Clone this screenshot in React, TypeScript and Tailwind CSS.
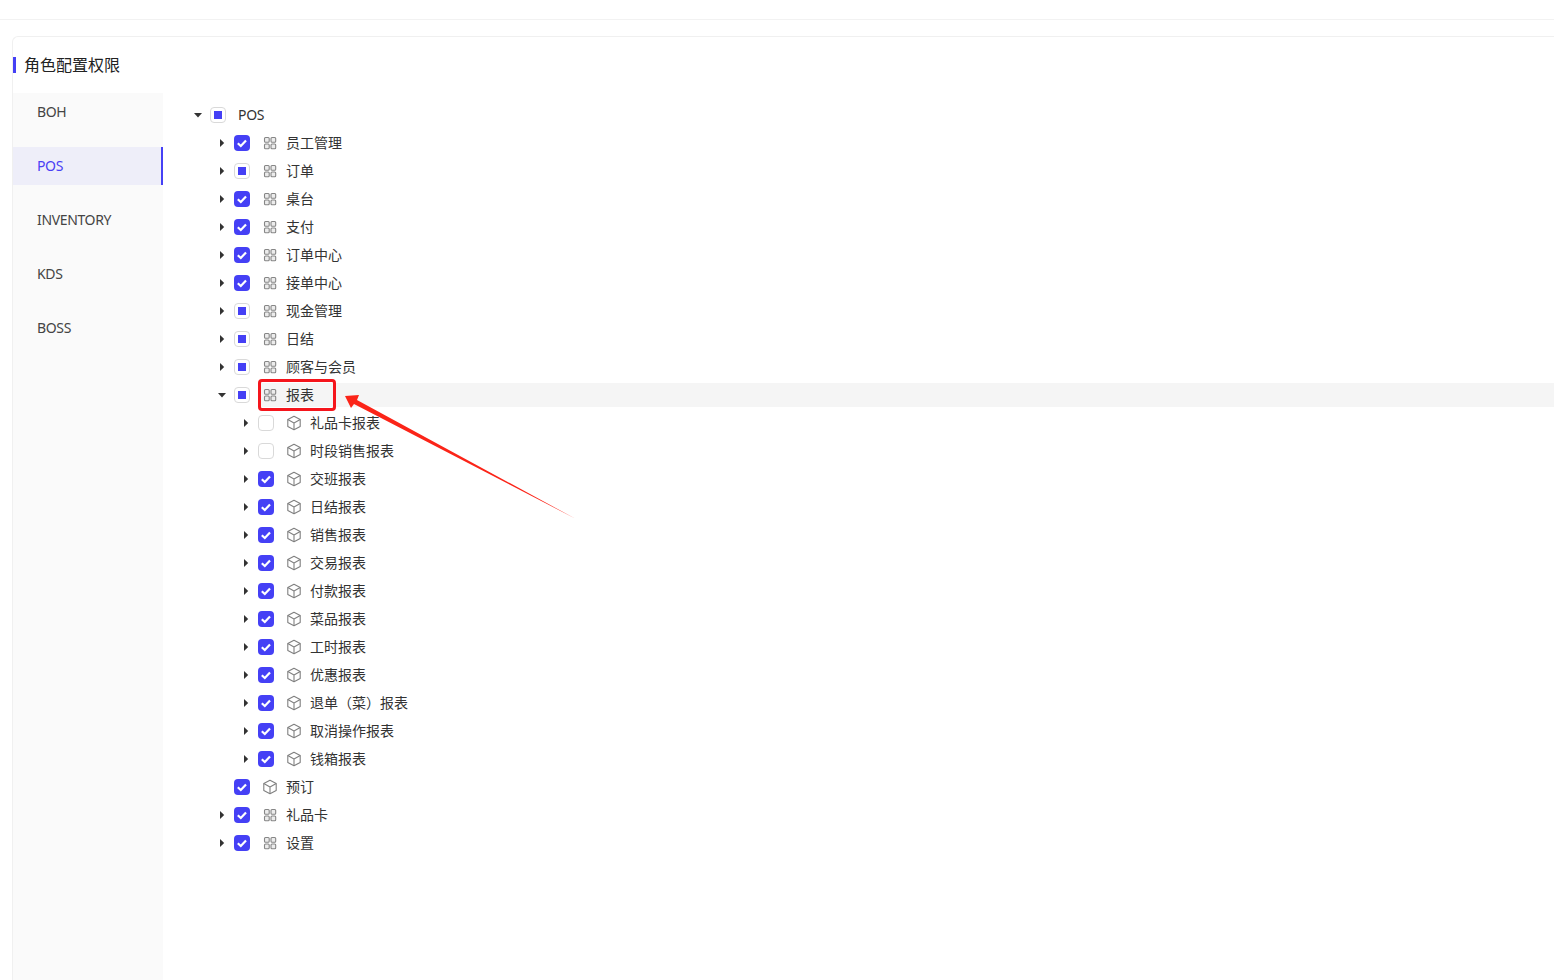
import React from "react";

function Grid() {
  return (
    <svg width="14" height="14" viewBox="0 0 14 14" fill="#ececec" stroke="#868686" strokeWidth="1.1">
      <rect x="1.5" y="1.5" width="4.7" height="4.7" rx="1" />
      <rect x="8" y="1.5" width="4.7" height="4.7" rx="1" />
      <rect x="1.5" y="8" width="4.7" height="4.7" rx="1" />
      <rect x="8" y="8" width="4.7" height="4.7" rx="1" />
    </svg>
  );
}

function Cube() {
  return (
    <svg width="16" height="16" viewBox="0 0 16 16" fill="none" stroke="#808080" strokeWidth="1.1" strokeLinejoin="round">
      <path d="M8 1.2 14.2 4.6V11.4L8 14.8 1.8 11.4V4.6Z" />
      <path d="M1.8 4.6 8 8 14.2 4.6M8 8V14.8" />
    </svg>
  );
}

function Caret({ open }: { open?: boolean }) {
  return (
    <svg width="10" height="10" viewBox="0 0 10 10" fill="#333333">
      {open ? <path d="M1 3H9L5 7.4Z" /> : <path d="M3 1V9L7.2 5Z" />}
    </svg>
  );
}

type State = "all" | "half" | "none";

function Check({ state }: { state: State }) {
  if (state === "all") {
    return (
      <span className="flex h-4 w-4 shrink-0 items-center justify-center rounded-[4px] bg-[#4540f5]">
        <svg width="14" height="14" viewBox="0 0 14 14" fill="none" stroke="#ffffff" strokeWidth="2.2">
          <path d="M2.8 7.2 5.8 10 11 4.4" />
        </svg>
      </span>
    );
  }
  return (
    <span className="flex h-4 w-4 shrink-0 items-center justify-center rounded-[4px] border border-[#d9d9d9] bg-white">
      {state === "half" && <span className="h-2 w-2 bg-[#4540f5]" />}
    </span>
  );
}

type Row = { level: number; label: string; state: State; icon?: "grid" | "cube"; open?: boolean; leaf?: boolean; active?: boolean };

const rows: Row[] = [
  { level: 0, label: "POS", state: "half", open: true },
  { level: 1, label: "员工管理", state: "all", icon: "grid" },
  { level: 1, label: "订单", state: "half", icon: "grid" },
  { level: 1, label: "桌台", state: "all", icon: "grid" },
  { level: 1, label: "支付", state: "all", icon: "grid" },
  { level: 1, label: "订单中心", state: "all", icon: "grid" },
  { level: 1, label: "接单中心", state: "all", icon: "grid" },
  { level: 1, label: "现金管理", state: "half", icon: "grid" },
  { level: 1, label: "日结", state: "half", icon: "grid" },
  { level: 1, label: "顾客与会员", state: "half", icon: "grid" },
  { level: 1, label: "报表", state: "half", icon: "grid", open: true, active: true },
  { level: 2, label: "礼品卡报表", state: "none", icon: "cube" },
  { level: 2, label: "时段销售报表", state: "none", icon: "cube" },
  { level: 2, label: "交班报表", state: "all", icon: "cube" },
  { level: 2, label: "日结报表", state: "all", icon: "cube" },
  { level: 2, label: "销售报表", state: "all", icon: "cube" },
  { level: 2, label: "交易报表", state: "all", icon: "cube" },
  { level: 2, label: "付款报表", state: "all", icon: "cube" },
  { level: 2, label: "菜品报表", state: "all", icon: "cube" },
  { level: 2, label: "工时报表", state: "all", icon: "cube" },
  { level: 2, label: "优惠报表", state: "all", icon: "cube" },
  { level: 2, label: "退单（菜）报表", state: "all", icon: "cube" },
  { level: 2, label: "取消操作报表", state: "all", icon: "cube" },
  { level: 2, label: "钱箱报表", state: "all", icon: "cube" },
  { level: 1, label: "预订", state: "all", icon: "cube", leaf: true },
  { level: 1, label: "礼品卡", state: "all", icon: "grid" },
  { level: 1, label: "设置", state: "all", icon: "grid" },
];

const tabs = ["BOH", "POS", "INVENTORY", "KDS", "BOSS"];

function TreeRow({ row }: { row: Row }) {
  return (
    <div className="flex h-7 items-center">
      <span className={row.level === 0 ? "w-0" : row.level === 1 ? "w-6" : "w-12"} />
      <span className="flex h-6 w-6 shrink-0 items-center justify-center">
        {!row.leaf && <Caret open={row.open} />}
      </span>
      <Check state={row.state} />
      <div className={"ml-2 flex h-6 flex-1 items-center " + (row.active ? "bg-[#f5f5f5]" : "")}>
        {row.icon && (
          <span className={"flex h-6 shrink-0 items-center " + (row.icon === "grid" ? "ml-[5px] w-[23px]" : "ml-1 w-6")}>
            {row.icon === "grid" ? <Grid /> : <Cube />}
          </span>
        )}
        <span className={row.icon ? "" : "ml-1 tracking-[-0.3px]"}>{row.label}</span>
      </div>
    </div>
  );
}

export default function App() {
  return (
    <div className="relative h-[980px] w-[1554px] overflow-hidden bg-white font-['Noto_Sans','Noto_Sans_CJK_SC',sans-serif] text-sm text-[#333333]">
      <div className="h-5 border-b border-[#f2f2f2]" />
      <div className="ml-3 mt-4 h-[960px] rounded-tl-md border-l border-t border-[#f0f0f0]">
        <div className="flex h-14 items-center pb-[1px]">
          <span className="h-4 w-[3px] bg-[#4540f5]" />
          <span className="ml-2 text-base leading-6 text-[#222222]">角色配置权限</span>
        </div>
        <div className="flex h-[887px]">
          <div className="w-[150px] shrink-0 bg-[#fafafa]">
            <div className="flex flex-col gap-4">
              {tabs.map((t) => (
                <div
                  key={t}
                  className={
                    "flex h-[38px] items-center pl-6 leading-[38px] tracking-[-0.35px] " +
                    (t === "POS" ? "border-r-2 border-[#4540f5] bg-[#eeeef9] text-[#4a40f5]" : "text-[#444444]")
                  }
                >
                  {t}
                </div>
              ))}
            </div>
          </div>
          <div className="flex-1 pl-[23px] pt-2">
            {rows.map((r) => (
              <TreeRow key={r.label} row={r} />
            ))}
          </div>
        </div>
      </div>

      <div className="pointer-events-none absolute left-[258px] top-[379px] h-8 w-[78px] rounded-[4px] border-[3px] border-[#f5151c]" />
      <svg className="pointer-events-none absolute left-0 top-0" width="1554" height="980" fill="none">
        <polygon points="345,396 359,395 357,400 576,519 354,404 351,408" fill="#fb2418" />
      </svg>
    </div>
  );
}
